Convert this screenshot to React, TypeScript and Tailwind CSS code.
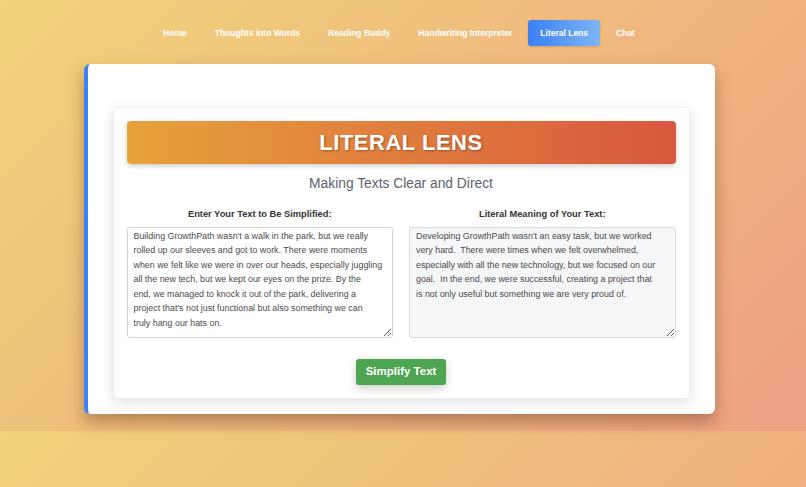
import React from 'react';

const comic = '[font-family:"Comic_Sans_MS","Liberation_Sans",sans-serif]';

const navItems = [
  'Home',
  'Thoughts into Words',
  'Reading Buddy',
  'Handwriting Interpreter',
  'Literal Lens',
  'Chat',
];

const inputText = `Building GrowthPath wasn't a walk in the park, but we really
rolled up our sleeves and got to work. There were moments
when we felt like we were in over our heads, especially juggling
all the new tech, but we kept our eyes on the prize. By the
end, we managed to knock it out of the park, delivering a
project that's not just functional but also something we can
truly hang our hats on.`;

const outputText = `Developing GrowthPath wasn't an easy task, but we worked
very hard.  There were times when we felt overwhelmed,
especially with all the new technology, but we focused on our
goal.  In the end, we were successful, creating a project that
is not only useful but something we are very proud of.`;

function NavBar() {
  return (
    <nav className="flex justify-center gap-[4px] pt-[20px] font-['Liberation_Sans',Arial,sans-serif]">
      {navItems.map((item) => {
        const active = item === 'Literal Lens';
        return (
          <a
            key={item}
            className={
              active
                ? 'h-[26px] flex items-center px-3 rounded-[3px] text-[8.5px] font-bold text-white bg-[linear-gradient(90deg,#3b7ff2,#7db6f6)] shadow-sm'
                : 'h-[26px] flex items-center px-3 text-[8.5px] font-bold text-white'
            }
          >
            {item}
          </a>
        );
      })}
    </nav>
  );
}

export default function App() {
  return (
    <div className="h-[487px] w-full overflow-hidden bg-[linear-gradient(135deg,#f1d379,#eea084)] bg-[length:100%_431px] bg-repeat">
      <div className="h-[431px] pr-[8px]">
        <NavBar />
        <div className="mx-auto mt-[18px] w-[631px] h-[350px] bg-white rounded-[6px] border-l-4 border-[#3b82f6] shadow-[0_8px_16px_rgba(90,50,20,0.4)] pt-[43px] px-[25px]">
          <div className="bg-white border border-[#eeeeee] rounded-[2px] shadow-[0_4px_14px_rgba(0,0,0,0.12)] p-[13px] flex flex-col">
            <div className="h-[43px] rounded-[4px] bg-[linear-gradient(90deg,#e7a23b,#d8573f)] shadow-[0_2px_5px_rgba(0,0,0,0.2)] flex items-center justify-center">
              <h1 className={`${comic} text-[22px] font-bold text-white tracking-[0.5px] [text-shadow:1px_1px_2px_rgba(0,0,0,0.35)]`}>
                LITERAL LENS
              </h1>
            </div>
            <p className={`${comic} mt-[10px] text-center text-[13.8px] text-[#5b6270]`}>
              Making Texts Clear and Direct
            </p>
            <div className="mt-[13px] grid grid-cols-2 gap-4">
              <div className="flex flex-col items-center">
                <label className={`${comic} text-[9.3px] font-bold text-[#333] mb-[5px]`}>
                  Enter Your Text to Be Simplified:
                </label>
                <textarea
                  readOnly
                  value={inputText}
                  className={`${comic} w-full h-[111px] resize-y overflow-hidden rounded-[3px] border border-[#d6d6d6] bg-white px-[6px] py-[1px] text-[8.9px] leading-[14.5px] text-[#4a4a4a] outline-none`}
                />
              </div>
              <div className="flex flex-col items-center">
                <label className={`${comic} text-[9.3px] font-bold text-[#333] mb-[5px]`}>
                  Literal Meaning of Your Text:
                </label>
                <textarea
                  readOnly
                  value={outputText}
                  className={`${comic} w-full h-[111px] resize-y overflow-hidden rounded-[3px] border border-[#d8dadd] bg-[#f5f6f8] px-[6px] py-[1px] text-[8.9px] leading-[14.5px] text-[#4a4a4a] outline-none`}
                />
              </div>
            </div>
            <div className="mt-[21px] flex justify-center">
              <button className={`${comic} h-[26px] w-[90px] rounded-[3px] bg-[#4ea652] text-[11.5px] font-bold text-white shadow-[0_3px_8px_rgba(0,0,0,0.2)]`}>
                Simplify Text
              </button>
            </div>
          </div>
        </div>
      </div>
    </div>
  );
}
